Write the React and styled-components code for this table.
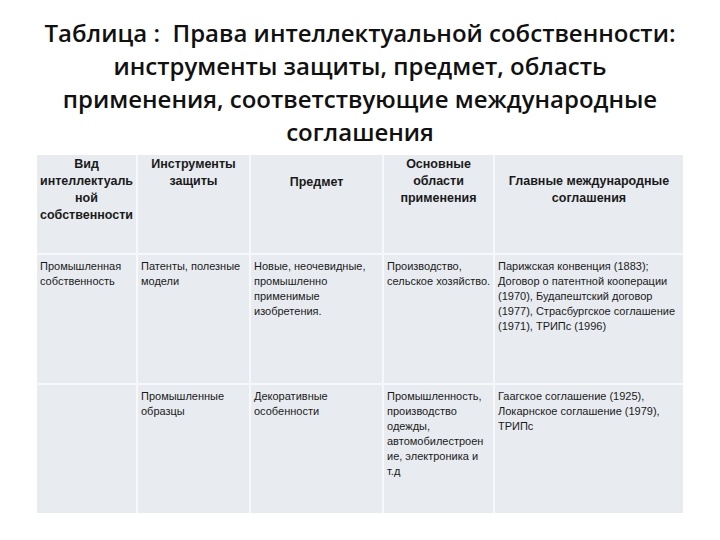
import React from "react";
import styled, { createGlobalStyle } from "styled-components";

const headers = [
  { lines: ["Вид", "интеллектуаль", "ной", "собственности"], offset: 0 },
  { lines: ["Инструменты", "защиты"], offset: 0 },
  { lines: ["Предмет"], offset: 18 },
  { lines: ["Основные", "области", "применения"], offset: 0 },
  { lines: ["Главные международные", "соглашения"], offset: 17 },
];

const rows = [
  [
    ["Промышленная", "собственность"],
    ["Патенты, полезные", "модели"],
    ["Новые, неочевидные,", "промышленно", "применимые", "изобретения."],
    ["Производство,", "сельское хозяйство."],
    [
      "Парижская конвенция (1883);",
      "Договор о патентной кооперации",
      "(1970), Будапештский договор",
      "(1977), Страсбургское соглашение",
      "(1971), ТРИПс (1996)",
    ],
  ],
  [
    [],
    ["Промышленные", "образцы"],
    ["Декоративные", "особенности"],
    ["Промышленность,", "производство", "одежды,", "автомобилестроен", "ие, электроника и", "т.д"],
    ["Гаагское соглашение (1925),", "Локарнское соглашение (1979),", "ТРИПс"],
  ],
];

const Lines = ({ lines }) =>
  lines.map((line, k) => (
    <React.Fragment key={k}>
      {k > 0 && <br />}
      {line}
    </React.Fragment>
  ));

const App = () => {
  return (
    <>
      <GlobalStyle />
      <Page>
        <Title>
          Таблица :&nbsp; Права интеллектуальной собственности:
          <br />
          инструменты защиты, предмет, область
          <br />
          применения, соответствующие международные
          <br />
          соглашения
        </Title>
        <Table>
          {headers.map((h, i) => (
            <HeadCell key={"h" + i} offset={h.offset}>
              <Lines lines={h.lines} />
            </HeadCell>
          ))}
          {rows.map((row, i) =>
            row.map((lines, j) => (
              <Cell key={i + "-" + j}>
                <Lines lines={lines} />
              </Cell>
            ))
          )}
        </Table>
      </Page>
    </>
  );
};

const GlobalStyle = createGlobalStyle`
  body {
    margin: 0;
    background: #ffffff;
  }
`;

const Page = styled.div`
  width: 720px;
  height: 540px;
  padding-top: 16px;
  box-sizing: border-box;
  overflow: hidden;
`;

const Title = styled.h1`
  margin: 0 0 7px 0;
  text-align: center;
  font-family: "Open Sans", sans-serif;
  font-weight: 600;
  font-size: 24px;
  line-height: 33px;
  color: #111;
`;

const Table = styled.div`
  margin-left: 37px;
  width: 646px;
  display: grid;
  grid-template-columns: 99px 111px 131px 109px 188px;
  grid-template-rows: 98px 128px 128px;
  gap: 2px;
  background: #f6f8fa;
`;

const Cell = styled.div`
  background: #e8ecf0;
  padding: 4px 2px 0 3px;
  font-family: "Liberation Sans", Arial, sans-serif;
  font-size: 11px;
  line-height: 15px;
  color: #1a1a1a;
  white-space: nowrap;
  overflow: hidden;
`;

const HeadCell = styled(Cell)`
  padding: ${(p) => 1 + (p.offset || 0)}px 0 0 0;
  text-align: center;
  font-weight: 700;
  font-size: 12.5px;
  line-height: 17px;
`;

export default App;
